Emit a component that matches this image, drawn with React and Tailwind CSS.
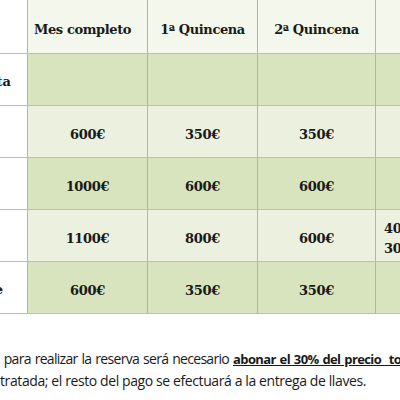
export default function App() {
  const serif = { fontFamily: '"DejaVu Serif", serif' };
  const rows = [
    { bg: 'bg-[#d7e4bd]', label: 'Alta', cells: ['', '', '', ''] },
    { bg: 'bg-[#ebf1de]', label: '', cells: ['600€', '350€', '350€', ''] },
    { bg: 'bg-[#d7e4bd]', label: '', cells: ['1000€', '600€', '600€', ''] },
    { bg: 'bg-[#ebf1de]', label: '', cells: ['1100€', '800€', '600€', 'multi'] },
    { bg: 'bg-[#d7e4bd]', label: 'Puente', cells: ['600€', '350€', '350€', ''] },
  ];
  return (
    <div className="w-[400px] h-[400px] overflow-hidden bg-white relative">
      <div className="flex flex-col w-[400px]">
        <div className="grid grid-cols-[27px_120px_110px_118px_60px] h-[54px] border-b border-[#b4cb8e]" style={serif}>
          <div className="bg-white"></div>
          <div className="bg-[#f3f7ec] border-l border-[#a8c27e] flex items-center justify-center font-bold text-[13px] tracking-[-0.4px] text-[#1a1a1a] pt-[6px] pr-[10px] whitespace-nowrap">Mes completo</div>
          <div className="bg-[#f3f7ec] border-l border-[#a8c27e] flex items-center justify-center font-bold text-[13px] tracking-[-0.4px] text-[#1a1a1a] pt-[6px] whitespace-nowrap">1ª Quincena</div>
          <div className="bg-[#f3f7ec] border-l border-[#a8c27e] flex items-center justify-center font-bold text-[13px] tracking-[-0.4px] text-[#1a1a1a] pt-[6px] whitespace-nowrap">2ª Quincena</div>
          <div className="bg-[#f3f7ec] border-l border-[#a8c27e]"></div>
        </div>
        {rows.map((r, i) => (
          <div key={i} className="grid grid-cols-[27px_120px_110px_118px_60px] h-[52px] border-b border-[#b4cb8e]" style={serif}>
            <div className="bg-white overflow-hidden flex items-center justify-end font-bold text-[13px] text-[#1a1a1a] pt-[4px]">
              <span className={i === 0 ? 'mr-[16px] whitespace-nowrap' : 'mr-[24px] whitespace-nowrap'}>{r.label}</span>
            </div>
            {r.cells.map((c, j) => (
              <div key={j} className={`${r.bg} border-l border-[#a8c27e] flex items-center ${j === 3 ? 'justify-start pl-[8px]' : 'justify-center'} font-bold text-[13px] tracking-[-0.3px] text-[#1a1a1a] pt-[6px]`}>
                {c === 'multi' ? (
                  <div className="flex flex-col leading-[20px] whitespace-nowrap">
                    <span>400€</span>
                    <span>300€</span>
                  </div>
                ) : c}
              </div>
            ))}
          </div>
        ))}
      </div>
      <div className="mt-[34px] text-[14px] text-[#1a1a1a] leading-[22px]" style={{ fontFamily: '"Open Sans", sans-serif' }}>
        <div className="whitespace-nowrap flex">
          <span className="ml-[-4px] underline">:</span>
          <span className="ml-[4px] tracking-[-0.7px] [word-spacing:1px]">para realizar la reserva será necesario</span>
          <span className="ml-[4px] font-bold underline text-[13px] tracking-[-0.6px] [word-spacing:1px]">abonar el 30% del precio&nbsp; total</span>
        </div>
        <div className="whitespace-nowrap tracking-[-0.4px]">tratada; el resto del pago se efectuará a la entrega de llaves.</div>
      </div>
    </div>
  );
}
